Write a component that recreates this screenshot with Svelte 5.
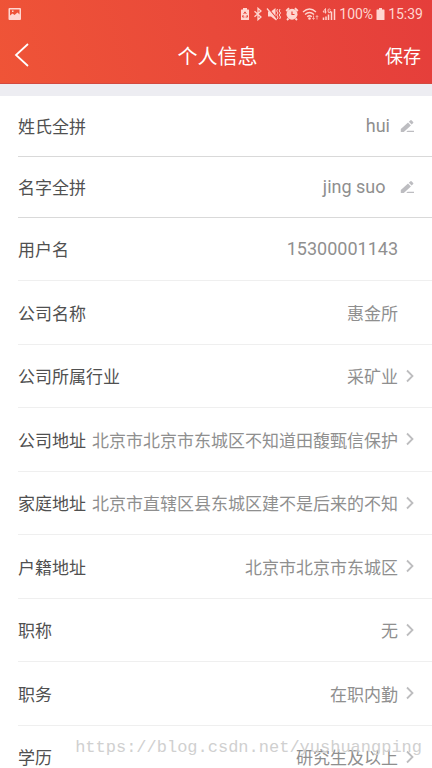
<script lang="ts">
  type Row = {
    id: string;
    label: string;
    value: string;
    kind: 'edit' | 'text' | 'pick';
  };

  let rows: Row[] = $state([
    { id: 'surname', label: '姓氏全拼', value: 'hui', kind: 'edit' },
    { id: 'given', label: '名字全拼', value: 'jing suo ', kind: 'edit' },
    { id: 'user', label: '用户名', value: '15300001143', kind: 'text' },
    { id: 'company', label: '公司名称', value: '惠金所', kind: 'text' },
    { id: 'industry', label: '公司所属行业', value: '采矿业', kind: 'pick' },
    { id: 'company-addr', label: '公司地址', value: '北京市北京市东城区不知道田馥甄信保护', kind: 'pick' },
    { id: 'home-addr', label: '家庭地址', value: '北京市直辖区县东城区建不是后来的不知', kind: 'pick' },
    { id: 'origin', label: '户籍地址', value: '北京市北京市东城区', kind: 'pick' },
    { id: 'title', label: '职称', value: '无', kind: 'pick' },
    { id: 'duty', label: '职务', value: '在职内勤', kind: 'pick' },
    { id: 'degree', label: '学历', value: '研究生及以上', kind: 'pick' },
  ]);

  const editable = $derived(rows.filter((r) => r.kind === 'edit'));
  const details = $derived(rows.filter((r) => r.kind !== 'edit'));
</script>

<div class="screen">
  <header>
    <div class="status">
      <svg class="picture" width="14" height="12" viewBox="0 0 14 12">
        <path
          fill="currentColor"
          fill-rule="evenodd"
          d="M1.500 0h10.500q1 0 1 1v10q0 1-1 1H1.500q-1 0-1-1V1q0-1 1-1zM2 1.500v6L4.500 5.500l2 1.500L9.500 4.500 11.500 6.500v-5zM4 2.500h1.500V4H4z"
        />
      </svg>
      <div class="indicators">
        <svg width="10" height="14" viewBox="0 0 10 14">
          <path fill="currentColor" d="M3 1h4v1.500h1.500q.5 0 .5.500v9.500q0 .5-.5.500h-7Q1 13 1 12.500V3q0-.5.5-.5H3z" />
          <path d="M3.700 7 5 4.800 6.300 7M7 8l.6 2H5.600M4.400 10H2.500L3.200 8" fill="none" stroke="#e8433a" />
        </svg>
        <svg width="10" height="14" viewBox="0 0 10 14">
          <path d="M1.500 4.200 8 10 5 12.700V1.300L8 4 1.500 9.800" fill="none" stroke="currentColor" stroke-width="1.300" />
        </svg>
        <svg width="16" height="14" viewBox="0 0 16 14">
          <path fill="currentColor" d="M2 4.500h3L9.500 1v12L5 9.500H2z" />
          <path d="M2 .8 11 12" stroke="#e8433a" stroke-width="1.200" />
          <path d="M1 1.500 10.500 13" stroke="currentColor" stroke-width="1.300" />
          <path
            d="M11.500 2l-.8 2 1.300 2-1.300 2 1.300 2-.8 2M14 2l-.8 2 1.300 2-1.300 2 1.300 2-.8 2"
            fill="none"
            stroke="currentColor"
          />
        </svg>
        <svg width="14" height="14" viewBox="0 0 14 14">
          <circle cx="7" cy="7.200" r="5.500" fill="currentColor" />
          <path d="M1.200 4 4 1.200M10 1.200 12.800 4M3.500 11.500 2 13M10.500 11.500 12 13" stroke="currentColor" stroke-width="1.800" />
          <path d="M7 4.500V7.500h2.500" fill="none" stroke="#e8433a" stroke-width="1.200" />
        </svg>
        <svg class="wifi" width="17" height="14" viewBox="0 0 17 14">
          <path
            d="M1 5Q7.500-1 14 5M3 7.500q4.500-4 9 0M5.200 9.800q2.300-2 4.600 0"
            fill="none"
            stroke="currentColor"
            stroke-width="1.300"
          />
          <circle cx="7.500" cy="11.500" r="1.300" fill="currentColor" />
          <path d="M11.500 8.500V12M10.300 11l1.200 1.500 1.200-1.500M15 12.500V9M13.800 10 15 8.500l1.200 1.500" fill="none" stroke="currentColor" stroke-width=".7" />
        </svg>
        <svg width="14" height="14" viewBox="0 0 14 14">
          <path d="M1.500 13v-2.500M4 13V9.500M6.500 13V7.500M9.500 13V4.500M12.500 13V2" stroke="currentColor" stroke-width="1.500" />
          <path d="M3.500 6.500v-5L1 5h3.500M8.500 2.500Q6 .8 6 4q0 2.500 2.500 1.500V4H7.500" fill="none" stroke="currentColor" stroke-width=".9" />
        </svg>
        <span class="percent">100%</span>
        <svg width="9" height="14" viewBox="0 0 9 14">
          <path fill="currentColor" d="M3 1h3v1.500h2q.5 0 .5.500v9.500q0 .5-.5.500H1q-.5 0-.5-.5V3q0-.5.5-.5h2z" />
        </svg>
        <span class="clock">15:39</span>
      </div>
    </div>
    <nav>
      <button class="back" aria-label="返回">
        <svg width="16" height="24" viewBox="0 0 16 24">
          <path d="M14 1 2 12 14 23" fill="none" stroke="currentColor" stroke-width="1.800" />
        </svg>
      </button>
      <h1>个人信息</h1>
      <button class="save">保存</button>
    </nav>
  </header>

  <main>
    <div class="names">
      {#each editable as row (row.id)}
        <div class="row">
          <label for={row.id}>{row.label}</label>
          <input id={row.id} type="text" bind:value={row.value} />
          <svg class="pencil" width="14" height="14" viewBox="0 0 14 14">
            <path fill="currentColor" d="M.8 13v-2.900L8 3.400l2.900 3L3.800 13zM8.800 2.700l1.700-1.500q.5-.4 1 0l1.700 1.700q.4.500 0 1l-1.600 1.700zM7.500 11.700H14V13H6.300z" />
          </svg>
        </div>
      {/each}
    </div>

    <div class="details">
      {#each details as row (row.id)}
        {#if row.kind === 'pick'}
          <button class="row">
            <span class="label">{row.label}</span>
            <span class="value">{row.value}</span>
            <svg class="chevron" width="8" height="14" viewBox="0 0 8 14">
              <path d="M1 1.500 6.500 7 1 12.500" fill="none" stroke="currentColor" stroke-width="1.800" />
            </svg>
          </button>
        {:else}
          <div class="row plain">
            <span class="label">{row.label}</span>
            <span class="value" class:number={row.id === 'user'}>{row.value}</span>
          </div>
        {/if}
      {/each}
    </div>
  </main>

  <div class="watermark">https://blog.csdn.net/yushuangping</div>
</div>

<style>
  :global(body) {
    margin: 0;
  }

  .screen {
    position: relative;
    height: 100vh;
    overflow: hidden;
    background: #ededf2;
    font-family: Roboto, 'Noto Sans CJK SC', sans-serif;
  }

  button {
    border: 0;
    padding: 0;
    background: none;
    color: inherit;
    font: inherit;
    cursor: pointer;
  }

  header {
    box-sizing: border-box;
    height: 84px;
    border-bottom: 1px solid #d3493f;
    background: linear-gradient(75deg, #ef5437, #e9493a 50%, #e53e3b);
    color: #fff;
  }

  .status {
    display: flex;
    align-items: center;
    justify-content: space-between;
    height: 28px;
    padding: 0 9px 0 8px;
    color: #ffd6d0;
    font-size: 14px;
  }

  .indicators {
    display: flex;
    align-items: center;
    gap: 3px;
  }

  nav {
    display: grid;
    grid-template-columns: 1fr auto 1fr;
    align-items: center;
    height: 54px;
    padding: 0 11px 0 14px;
  }

  .back {
    display: flex;
    justify-self: start;
  }

  h1 {
    margin: 0;
    font-size: 20px;
    font-weight: 400;
  }

  .save {
    justify-self: end;
    font-size: 18px;
  }

  main {
    margin-top: 12px;
    padding-left: 18px;
    background: #fff;
    font-size: 17px;
  }

  .row {
    box-sizing: border-box;
    display: flex;
    align-items: center;
    width: 100%;
    height: 63px;
    border-bottom: 1px solid #efefef;
    padding: 0 18px 1px 0;
    color: #505050;
    text-align: left;
    white-space: nowrap;
  }

  .names .row {
    height: 61px;
    border-color: #d9d9d9;
  }

  .details .row:nth-child(even) {
    height: 64px;
  }

  .plain {
    padding-right: 34px;
  }

  input,
  .value {
    flex: 1;
    min-width: 0;
    color: #8f8f8f;
    text-align: right;
  }

  input {
    border: 0;
    padding: 0;
    outline: 0;
    background: none;
    font-family: inherit;
    font-size: 18px;
  }

  .number {
    font-size: 18px;
  }

  .pencil {
    margin-left: 10px;
    color: #bdbdc1;
  }

  .chevron {
    margin-left: 8px;
    color: #bdbdbf;
  }

  .watermark {
    position: absolute;
    right: 10px;
    bottom: 9px;
    color: #d0d0d0;
    font-family: 'Liberation Mono', monospace;
    font-size: 17px;
    line-height: 22px;
    pointer-events: none;
  }
</style>
